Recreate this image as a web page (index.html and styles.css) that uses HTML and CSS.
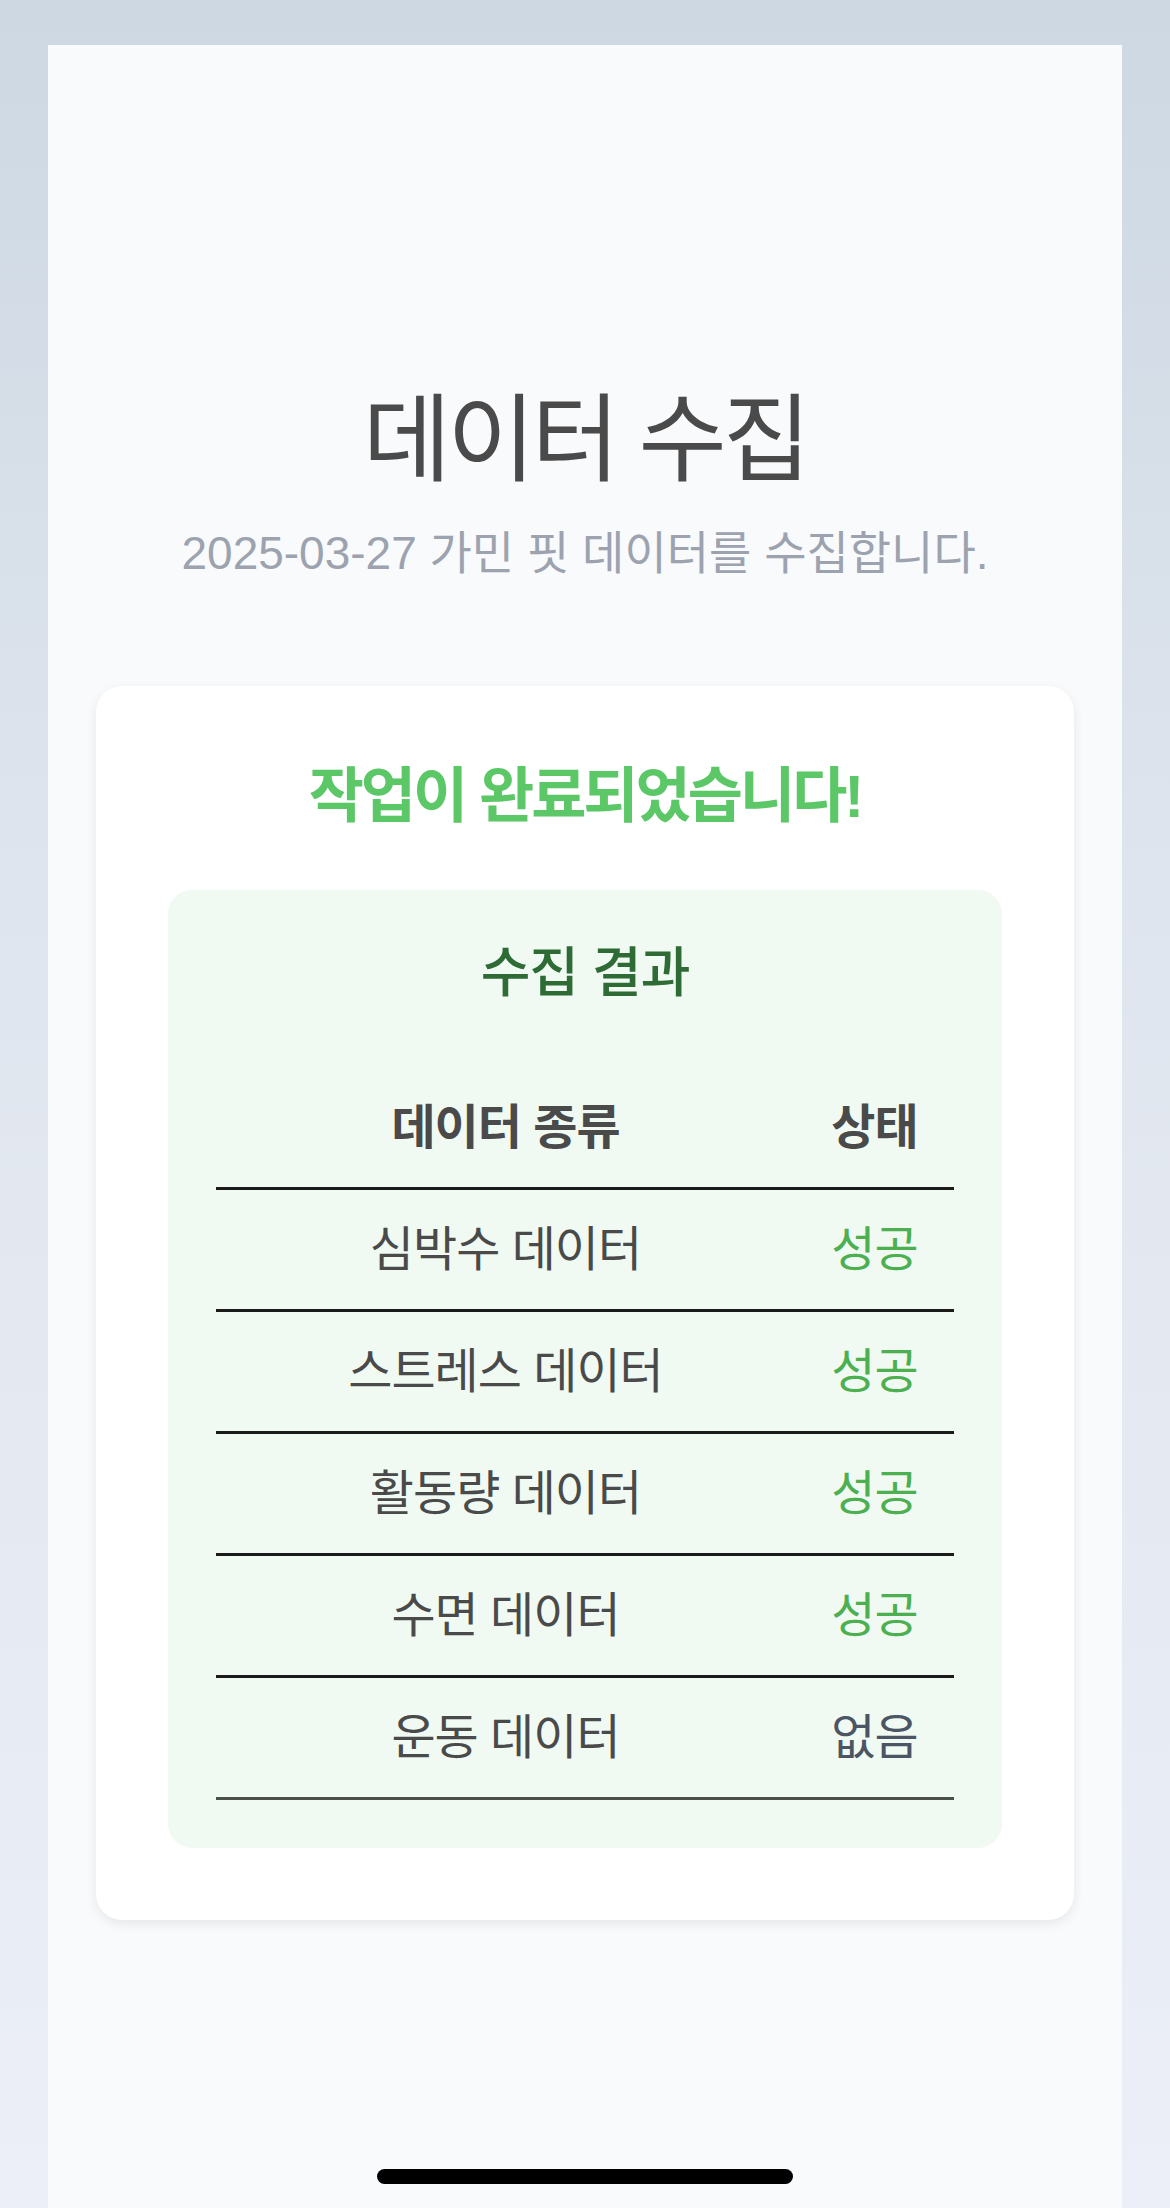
FILE: index.html
```html
<!DOCTYPE html>
<html lang="ko">
<head>
<meta charset="utf-8">
<title>데이터 수집</title>
<link rel="stylesheet" href="styles.css">
</head>
<body>
<div class="phone">
  <header class="header">
    <h1 class="title">데이터 수집</h1>
    <p class="subtitle">2025-03-27 가민 핏 데이터를 수집합니다.</p>
  </header>
  <section class="card">
    <h2 class="done">작업이 완료되었습니다!</h2>
    <div class="result">
      <h3 class="result-title">수집 결과</h3>
      <div class="table">
        <div class="row head"><div class="cell">데이터 종류</div><div class="cell">상태</div></div>
        <div class="row"><div class="cell">심박수 데이터</div><div class="cell ok">성공</div></div>
        <div class="row"><div class="cell">스트레스 데이터</div><div class="cell ok">성공</div></div>
        <div class="row"><div class="cell">활동량 데이터</div><div class="cell ok">성공</div></div>
        <div class="row"><div class="cell">수면 데이터</div><div class="cell ok">성공</div></div>
        <div class="row last"><div class="cell">운동 데이터</div><div class="cell none">없음</div></div>
      </div>
    </div>
  </section>
  <div class="home-indicator"></div>
</div>
</body>
</html>
```
FILE: styles.css
```css
* { box-sizing: border-box; }
html, body { margin: 0; padding: 0; }
body {
  width: 1170px;
  height: 2208px;
  overflow: hidden;
  background: linear-gradient(180deg, #cdd8e2 0%, #dfe5ee 40%, #eceff7 100%);
  font-family: "Liberation Sans", "Noto Sans CJK KR", sans-serif;
  color: #4a4a4a;
}
.phone {
  position: relative;
  margin: 45px 48px 0;
  height: 2163px;
  background: #f8fafc;
  padding: 337px 48px 0;
}
.header { text-align: center; }
.title {
  margin: 0;
  font-size: 96px;
  line-height: 115px;
  font-weight: 400;
  letter-spacing: -4px;
  color: #4a4a4a;
}
.subtitle {
  margin: 23px 0 0;
  font-size: 46px;
  line-height: 67px;
  color: #9ca3af;
}
.card {
  margin-top: 99px;
  background: #ffffff;
  border-radius: 26px;
  padding: 72px;
  box-shadow: 0 4px 12px rgba(0, 0, 0, 0.08);
}
.done {
  margin: 0;
  text-align: center;
  font-size: 60px;
  line-height: 78px;
  font-weight: 700;
  letter-spacing: -3px;
  color: #5cc767;
}
.result {
  margin-top: 54px;
  background: #f0faf3;
  border-radius: 24px;
  padding: 48px;
}
.result-title {
  margin: 0;
  text-align: center;
  font-size: 54px;
  line-height: 70px;
  font-weight: 500;
  letter-spacing: -1px;
  color: #2e6b35;
}
.table { margin-top: 60px; }
.row {
  display: grid;
  grid-template-columns: 1fr 159px;
  border-bottom: 3px solid #1a1a1a;
}
.row.last { border-bottom-color: #4a4f4a; }
.cell {
  text-align: center;
  font-size: 48px;
  line-height: 67px;
  padding: 26px 0;
  letter-spacing: -1px;
  color: #4a4a4a;
}
.head .cell { font-weight: 700; }
.ok { color: #4caf50; }
.none { color: #4b5563; }
.home-indicator {
  position: absolute;
  left: 329px;
  bottom: 24px;
  width: 416px;
  height: 15px;
  border-radius: 8px;
  background: #000;
}
```
